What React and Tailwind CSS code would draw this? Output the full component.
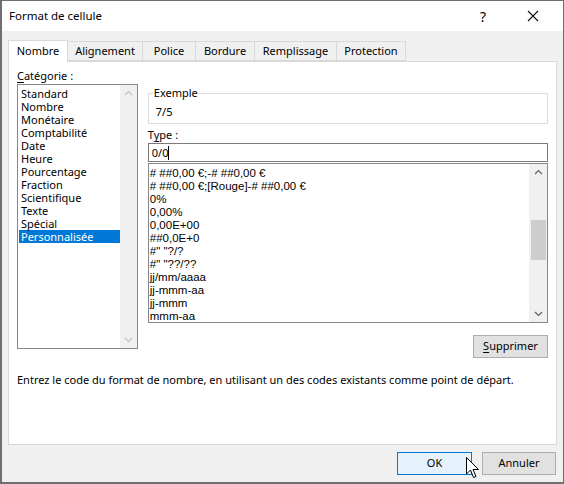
import React from 'react';

const categories = [
  'Standard', 'Nombre', 'Monétaire', 'Comptabilité', 'Date', 'Heure',
  'Pourcentage', 'Fraction', 'Scientifique', 'Texte', 'Spécial', 'Personnalisée',
];

const formats = [
  '# ##0,00 €;-# ##0,00 €',
  '# ##0,00 €;[Rouge]-# ##0,00 €',
  '0%',
  '0,00%',
  '0,00E+00',
  '##0,0E+0',
  '#" "?/?',
  '#" "??/??',
  'jj/mm/aaaa',
  'jj-mmm-aa',
  'jj-mmm',
  'mmm-aa',
];

const tabs = [
  { label: 'Nombre', w: 'w-[60px]' },
  { label: 'Alignement', w: 'w-[75px]' },
  { label: 'Police', w: 'w-[53px]' },
  { label: 'Bordure', w: 'w-[59px]' },
  { label: 'Remplissage', w: 'w-[82px]' },
  { label: 'Protection', w: 'w-[69px]' },
];

// small chevron used by the scrollbars
const Chevron = ({ up = true, color = '#606060' }) => (
  <svg width="9" height="6" viewBox="0 0 9 6">
    <path
      d={up ? 'M1 5 L4.5 1.5 L8 5' : 'M1 1 L4.5 4.5 L8 1'}
      fill="none"
      stroke={color}
      strokeWidth="1.2"
    />
  </svg>
);

const App = () => {
  return (
    <div className="relative w-[564px] h-[484px] bg-[#f0f0f0] border-l-2 border-r border-t border-b-2 border-[#6f6f6f] overflow-hidden text-[11px] text-black font-['Noto_Sans',sans-serif] select-none">
      {/* Title bar */}
      <div className="h-[30px] bg-white flex items-center pl-[7px] text-[11.5px]">
        <span className="flex-1">Format de cellule</span>
        <span className="w-[40px] text-center text-[14px]">?</span>
        <span className="w-[60px] flex justify-center">
          <svg width="12" height="12" viewBox="0 0 12 12">
            <path d="M1 1 L11 11 M11 1 L1 11" stroke="#111" strokeWidth="1.1" />
          </svg>
        </span>
      </div>

      {/* Tabs */}
      <div className="px-[6px] pt-[8px]">
        <div className="flex items-end h-[22px]">
          {tabs.map((t, i) =>
            i === 0 ? (
              <div
                key={t.label}
                className={`${t.w} h-[22px] bg-white border border-b-0 border-[#d9d9d9] flex items-center justify-center relative z-10 -mb-px`}
              >
                {t.label}
              </div>
            ) : (
              <div
                key={t.label}
                className={`${t.w} h-[20px] bg-[#f0f0f0] border border-l-0 border-[#d9d9d9] flex items-center justify-center`}
              >
                {t.label}
              </div>
            )
          )}
        </div>

        {/* Panel */}
        <div className="h-[384px] bg-white border border-[#d9d9d9] px-[8px] pt-[6px] flex flex-col">
          <div className="flex gap-[10px]">
            {/* Category column */}
            <div className="w-[121px] flex flex-col">
              <div className="h-[16px] leading-[16px]">
                <span className="underline underline-offset-2">C</span>atégorie :
              </div>
              <div className="h-[265px] border border-[#828790] flex">
                <div className="flex-1 pt-[2px] pl-[1px]">
                  {categories.map((c) => (
                    <div
                      key={c}
                      className={`h-[13px] leading-[13px] pl-[2px] ${c === 'Personnalisée' ? 'bg-[#0078d7] text-white' : ''}`}
                    >
                      {c}
                    </div>
                  ))}
                </div>
                <div className="w-[17px] bg-[#f0f0f0] flex flex-col items-center justify-between py-[5px]">
                  <Chevron up color="#c2c2c2" />
                  <Chevron up={false} color="#c2c2c2" />
                </div>
              </div>
            </div>

            {/* Type column */}
            <div className="w-[401px] flex flex-col">
              <div className="mt-[25px] h-[31px] border border-[#dcdcdc] relative">
                <span className="absolute -top-[9px] left-[4px] bg-white px-[1px] leading-[16px]">
                  Exemple
                </span>
                <div className="pt-[11px] pl-[7px] leading-[14px]">7/5</div>
              </div>
              <div className="mt-[3px] h-[16px] leading-[16px]">
                T<span className="underline underline-offset-2">y</span>pe :
              </div>
              <div className="h-[19px] border border-[#7a7a7a] flex items-center pl-[3px] leading-[16px]">
                0/0<span className="w-px h-[14px] bg-black" />
              </div>
              <div className="mt-[1px] h-[160px] border border-[#828790] flex">
                <div className="flex-1 pt-[3px] pl-[1px] font-['Liberation_Sans',sans-serif] text-[11.5px]">
                  {formats.map((f) => (
                    <div key={f} className="h-[13px] leading-[13px] whitespace-pre">
                      {f}
                    </div>
                  ))}
                </div>
                <div className="w-[18px] bg-[#f0f0f0] flex flex-col items-center py-[5px]">
                  <Chevron up />
                  <div className="mt-[45px] w-[15px] h-[40px] bg-[#cdcdcd]" />
                  <div className="flex-1" />
                  <Chevron up={false} />
                </div>
              </div>
              <div className="flex justify-end mt-[12px]">
                <div className="w-[75px] h-[23px] bg-[#e1e1e1] border border-[#adadad] flex items-center justify-center">
                  <span className="underline underline-offset-2">S</span>upprimer
                </div>
              </div>
            </div>
          </div>

          <div className="mt-[14px] leading-[16px]">
            Entrez le code du format de nombre, en utilisant un des codes existants comme point de départ.
          </div>
        </div>

        {/* Buttons */}
        <div className="flex justify-end gap-[10px] pt-[7px] pr-[1px]">
          <div className="w-[75px] h-[23px] bg-[#e5f1fb] border border-[#0078d7] flex items-center justify-center">
            OK
          </div>
          <div className="w-[74px] h-[23px] bg-[#e1e1e1] border border-[#adadad] flex items-center justify-center">
            Annuler
          </div>
        </div>
      </div>

      {/* Mouse pointer over the OK button */}
      <svg className="absolute left-[464px] top-[456px]" width="14" height="22" viewBox="0 0 14 22">
        <path
          d="M0.5 0.5 L0.5 17 L4.5 13 L7.5 20.5 L10 19.5 L7 12.5 L12.5 12.5 Z"
          fill="white"
          stroke="black"
          strokeWidth="1"
        />
      </svg>
    </div>
  );
};

export default App;
